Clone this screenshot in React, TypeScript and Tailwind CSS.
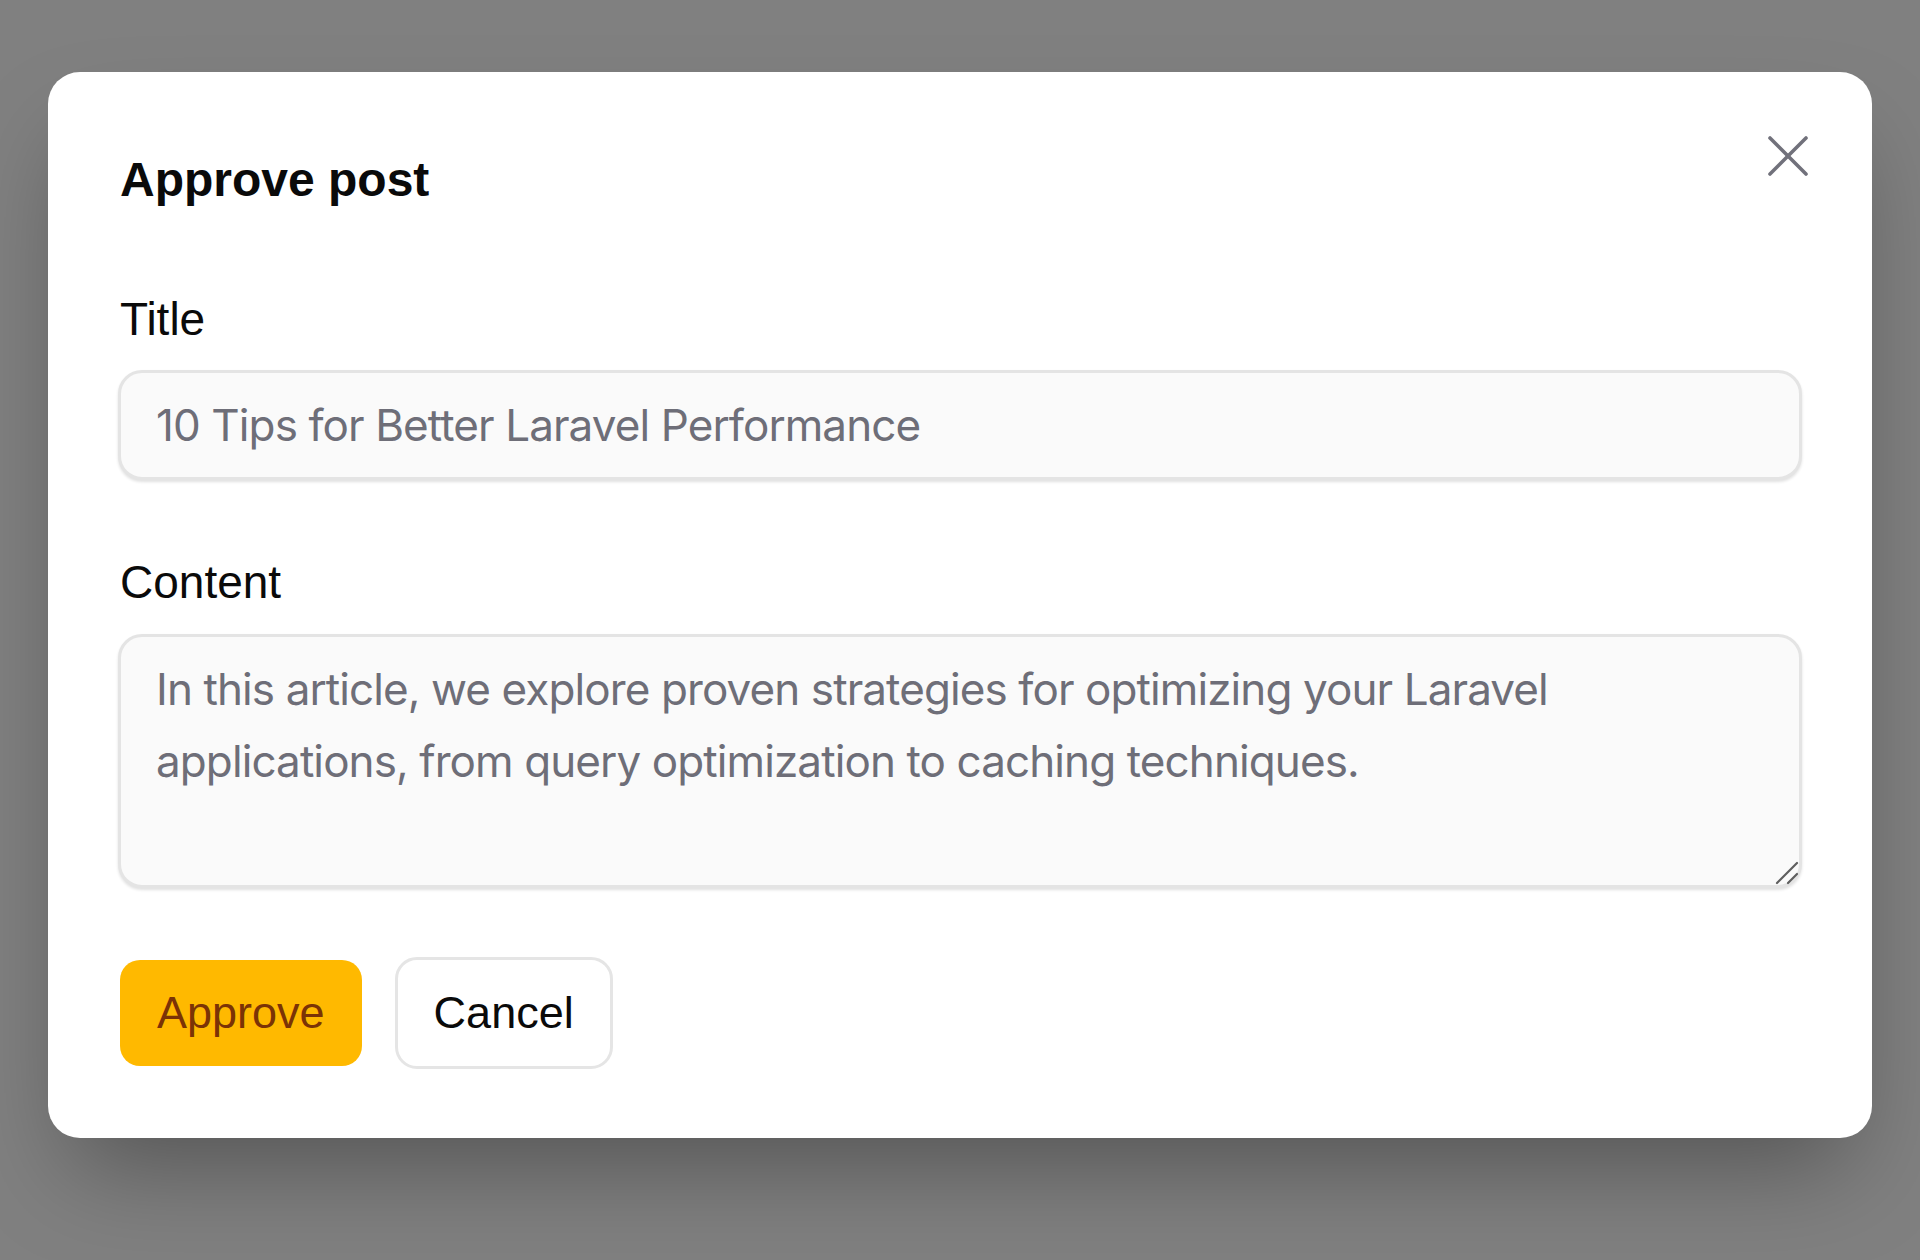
import { useState } from 'react';

function CloseIcon() {
    return (
        <svg viewBox="0 0 40 40" className="h-10 w-10" fill="none" stroke="currentColor" strokeWidth={3.6} strokeLinecap="round">
            <path d="M2 2 38 38" />
            <path d="M38 2 2 38" />
        </svg>
    );
}

function ResizeGrip() {
    return (
        <svg viewBox="0 0 26 26" className="pointer-events-none absolute bottom-[2px] right-[2px] h-[26px] w-[26px]" fill="none" stroke="#5f5f5f" strokeWidth={2.2} strokeLinecap="round">
            <path d="M3 23 23 3" />
            <path d="M14 23 23 14" />
        </svg>
    );
}

export default function App() {
    const [title, setTitle] = useState('10 Tips for Better Laravel Performance');
    const [content, setContent] = useState(
        'In this article, we explore proven strategies for optimizing your Laravel applications, from query optimization to caching techniques.',
    );

    return (
        <div className="min-h-screen bg-[#808080] px-12 pt-[72px] font-['Liberation_Sans',Arial,sans-serif]">
            <div className="relative rounded-[32px] bg-white px-[72px] pb-[69px] pt-[72px] shadow-[0_50px_100px_-24px_rgba(0,0,0,0.35)]">
                <button
                    type="button"
                    aria-label="Close"
                    className="absolute right-16 top-16 text-zinc-500 hover:text-zinc-700"
                >
                    <CloseIcon />
                </button>

                <h2 className="text-[48px] font-bold leading-[72px] text-neutral-950">Approve post</h2>

                <form className="mt-[70px]" onSubmit={(e) => e.preventDefault()}>
                    <label className="block text-[46px] leading-[66px] text-neutral-950">Title</label>
                    <div className="-mx-[2px] mt-[18px]">
                        <input
                            value={title}
                            onChange={(e) => setTitle(e.target.value)}
                            className="block h-[110px] w-full rounded-[24px] border-[3px] border-[#e4e4e4] bg-neutral-50 px-[35px] font-['Inter',sans-serif] text-[44px] tracking-[-0.9px] text-[#6e6e78] shadow-[0_2px_3px_rgba(0,0,0,0.12)] outline-none"
                        />
                    </div>

                    <label className="mt-[69px] block text-[46px] leading-[66px] text-neutral-950">Content</label>
                    <div className="relative -mx-[2px] mt-[19px]">
                        <textarea
                            rows={3}
                            value={content}
                            onChange={(e) => setContent(e.target.value)}
                            className="block h-[254px] w-full resize-none rounded-[24px] border-[3px] border-[#e4e4e4] bg-neutral-50 px-[35px] py-4 font-['Inter',sans-serif] text-[44px] leading-[72px] tracking-[-0.9px] text-[#6e6e78] shadow-[0_2px_3px_rgba(0,0,0,0.12)] outline-none"
                        />
                        <ResizeGrip />
                    </div>

                    <div className="mt-[69px] flex items-center gap-[33px]">
                        <button
                            type="submit"
                            className="h-[106px] rounded-[20px] bg-amber-400 px-[37px] text-[45px] text-amber-900"
                        >
                            Approve
                        </button>
                        <button
                            type="button"
                            className="h-[112px] rounded-[22px] border-[3px] border-[#e5e5e5] bg-white px-9 text-[45px] text-neutral-950"
                        >
                            Cancel
                        </button>
                    </div>
                </form>
            </div>
        </div>
    );
}
